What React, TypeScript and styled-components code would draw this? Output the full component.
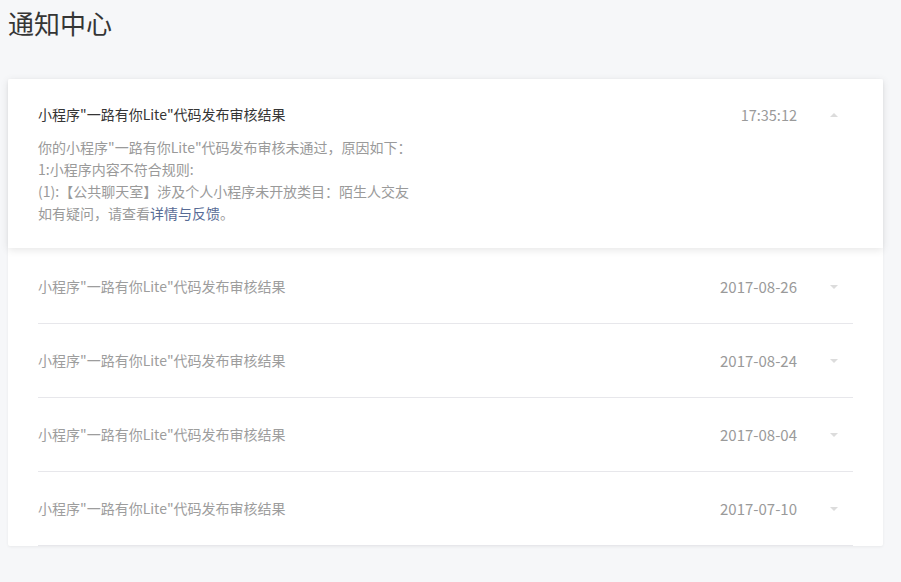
import React from "react";
import styled, { createGlobalStyle } from "styled-components";

const Global = createGlobalStyle`
  html, body { margin: 0; padding: 0; background: #f6f7f9; }
  body { font-family: "Microsoft YaHei", "Noto Sans CJK SC", "Noto Sans", sans-serif; }
`;

const Page = styled.div`
  padding: 0 18px 36px 8px;
  min-height: 582px;
  box-sizing: border-box;
`;

const Title = styled.h1`
  margin: 0;
  padding-top: 6px;
  height: 79px;
  box-sizing: border-box;
  font-size: 26px;
  line-height: 34px;
  font-weight: 400;
  color: #353535;
  font-family: "Noto Sans CJK SC", sans-serif;
`;

const Card = styled.div`
  background: #fff;
  border-radius: 2px;
  box-shadow: 0 1px 3px rgba(0, 0, 0, 0.06);
`;

const Item = styled.div<{ $open?: boolean }>`
  padding: 0 30px;
  ${(p) =>
    p.$open
      ? `box-shadow: 0 2px 8px rgba(0,0,0,0.1); position: relative; padding-bottom: 24px; margin-bottom: 2px;`
      : ``}
`;

const Head = styled.div<{ $open?: boolean }>`
  display: flex;
  align-items: center;
  padding: ${(p) => (p.$open ? "24px 0 0" : "25px 0 25px")};
  border-bottom: ${(p) => (p.$open ? "none" : "1px solid #e7e7eb")};
  font-size: 14px;
  line-height: 23px;
`;

const ItemTitle = styled.div<{ $open?: boolean }>`
  flex: 1;
  color: ${(p) => (p.$open ? "#353535" : "#9d9d9d")};
`;

const Time = styled.div<{ $date?: boolean }>`
  color: #9a9a9a;
  font-size: ${(p) => (p.$date ? "15px" : "14.5px")};
  margin-right: 30px;
  font-family: "Noto Sans CJK SC", sans-serif;
`;

const Arrow = styled.span<{ $up?: boolean }>`
  width: 14px;
  display: flex;
  justify-content: center;
  margin-right: 12px;
  &::before {
    content: "";
    width: 0;
    height: 0;
    border-left: 4px solid transparent;
    border-right: 4px solid transparent;
    ${(p) =>
      p.$up
        ? "border-bottom: 4px solid #dcdcdc;"
        : "border-top: 4px solid #dcdcdc;"}
  }
`;

const Body = styled.div`
  margin-top: 10px;
  font-size: 14px;
  line-height: 22px;
  color: #9a9a9a;
`;

const Link = styled.a`
  color: #576b95;
  text-decoration: none;
`;

const title = "小程序\"一路有你Lite\"代码发布审核结果";
const rows = ["2017-08-26", "2017-08-24", "2017-08-04", "2017-07-10"];

export default function App() {
  return (
    <Page>
      <Global />
      <Title>通知中心</Title>
      <Card>
        <Item $open>
          <Head $open>
            <ItemTitle $open>{title}</ItemTitle>
            <Time>17:35:12</Time>
            <Arrow $up />
          </Head>
          <Body>
            <div>你的小程序"一路有你Lite"代码发布审核未通过，原因如下：</div>
            <div>1:小程序内容不符合规则:</div>
            <div>(1):【公共聊天室】涉及个人小程序未开放类目：陌生人交友</div>
            <div>
              如有疑问，请查看<Link href="#">详情与反馈</Link>。
            </div>
          </Body>
        </Item>
        {rows.map((d) => (
          <Item key={d}>
            <Head>
              <ItemTitle>{title}</ItemTitle>
              <Time $date>{d}</Time>
              <Arrow />
            </Head>
          </Item>
        ))}
      </Card>
    </Page>
  );
}
